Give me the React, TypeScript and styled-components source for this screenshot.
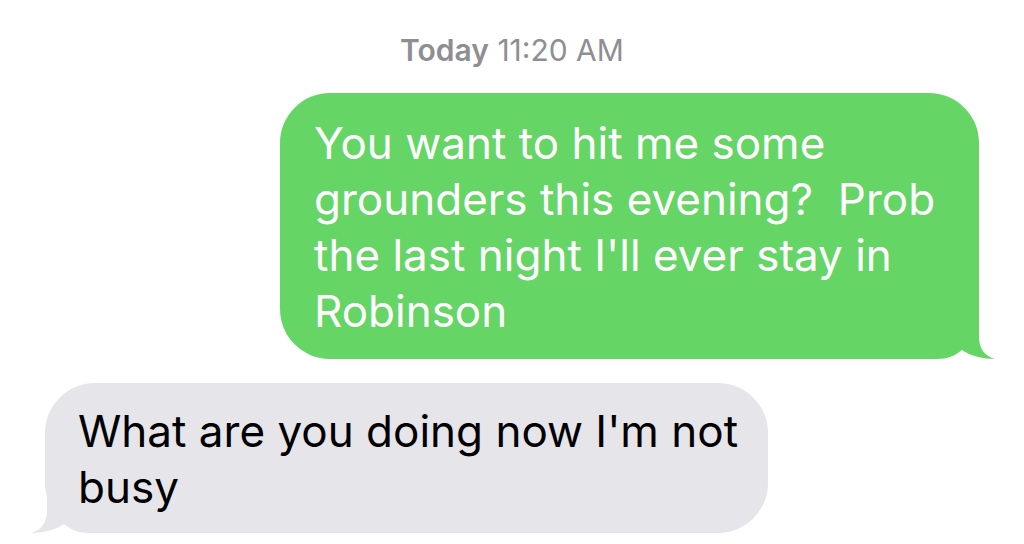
import React from "react";
import styled, { createGlobalStyle } from "styled-components";

const Global = createGlobalStyle`
  html, body { margin: 0; padding: 0; background: #ffffff; }
  body { width: 1024px; height: 544px; overflow: hidden; }
`;

const Screen = styled.div`
  width: 1024px;
  height: 544px;
  display: flex;
  flex-direction: column;
  font-family: Inter, "Liberation Sans", sans-serif;
`;

const Stamp = styled.div`
  margin-top: 33px;
  height: 34px;
  line-height: 34px;
  text-align: center;
  font-size: 30px;
  color: #8e8e93;
  b { font-weight: 600; }
`;

const Row = styled.div<{ $top: number }>`
  display: flex;
  margin-top: ${(p) => p.$top}px;
`;

const Bubble = styled.div<{ $out?: boolean; $left: number; $width: number }>`
  position: relative;
  margin-left: ${(p) => p.$left}px;
  width: ${(p) => p.$width}px;
  box-sizing: border-box;
  padding: ${(p) => (p.$out ? "22px 20px 20px 34px" : "20px 20px 18px 33px")};
  background: ${(p) => (p.$out ? "#65d566" : "#e5e5ea")};
  color: ${(p) => (p.$out ? "#ffffff" : "#000000")};
  border-radius: 50px;
  font-size: 44px;
  line-height: 56px;
`;

const Text = styled.span`
  position: relative;
  z-index: 1;
`;

const Tail = styled.svg<{ $out?: boolean }>`
  position: absolute;
  z-index: 0;
  bottom: 0;
  width: 67px;
  height: 60px;
  ${(p) =>
    p.$out
      ? "right: -17px;"
      : "left: -15px; transform: scaleX(-1);"}
`;

const TailShape = ({ out, color }: { out?: boolean; color: string }) => (
  <Tail $out={out} viewBox="0 0 67 60">
    <path
      d="M0 0 H50 V38 C50 50 56 57 66 60 C55 60 41 57 33 51 C26 57 18 60 8 60 H0 Z"
      fill={color}
    />
  </Tail>
);

export default function App() {
  return (
    <>
      <Global />
      <Screen>
        <Stamp>
          <b>Today</b> 11:20 AM
        </Stamp>
        <Row $top={26}>
          <Bubble $out $left={280} $width={699}>
            <TailShape out color="#65d566" />
            <Text>
              You want to hit me some grounders this evening?&nbsp; Prob the last night I'll ever stay in Robinson
            </Text>
          </Bubble>
        </Row>
        <Row $top={24}>
          <Bubble $left={45} $width={723}>
            <TailShape color="#e5e5ea" />
            <Text>What are you doing now I'm not busy</Text>
          </Bubble>
        </Row>
      </Screen>
    </>
  );
}
